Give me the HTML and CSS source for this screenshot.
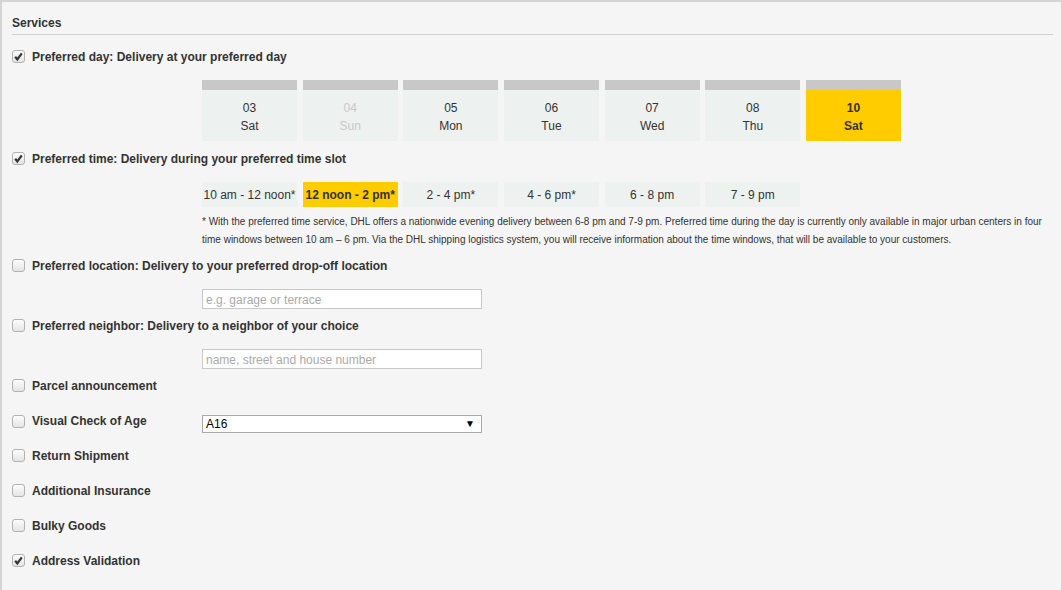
FILE: index.html
```html
<!DOCTYPE html>
<html lang="en">
<head>
<meta charset="utf-8">
<title>Services</title>
<link rel="stylesheet" href="styles.css">
</head>
<body>
<div class="panel">
  <h2 class="title">Services</h2>

  <label class="row r-day">
    <span class="cb checked"><svg viewBox="0 0 13 13" width="13" height="13"><path d="M3.2 6.8 L5.3 9.4 L9.8 3.3" fill="none" stroke="#333" stroke-width="2.2"/></svg></span>
    <span class="lbl">Preferred day: Delivery at your preferred day</span>
  </label>
  <div class="days">
    <div class="day"><div class="bar"></div><div class="body">03<br>Sat</div></div>
    <div class="day off"><div class="bar"></div><div class="body">04<br>Sun</div></div>
    <div class="day"><div class="bar"></div><div class="body">05<br>Mon</div></div>
    <div class="day"><div class="bar"></div><div class="body">06<br>Tue</div></div>
    <div class="day"><div class="bar"></div><div class="body">07<br>Wed</div></div>
    <div class="day"><div class="bar"></div><div class="body">08<br>Thu</div></div>
    <div class="day sel"><div class="bar"></div><div class="body">10<br>Sat</div></div>
  </div>

  <label class="row r-time">
    <span class="cb checked"><svg viewBox="0 0 13 13" width="13" height="13"><path d="M3.2 6.8 L5.3 9.4 L9.8 3.3" fill="none" stroke="#333" stroke-width="2.2"/></svg></span>
    <span class="lbl">Preferred time: Delivery during your preferred time slot</span>
  </label>
  <div class="slots">
    <div class="slot">10 am - 12 noon*</div>
    <div class="slot sel">12 noon - 2 pm*</div>
    <div class="slot">2 - 4 pm*</div>
    <div class="slot">4 - 6 pm*</div>
    <div class="slot">6 - 8 pm</div>
    <div class="slot">7 - 9 pm</div>
  </div>
  <p class="note">* With the preferred time service, DHL offers a nationwide evening delivery between 6-8 pm and 7-9 pm. Preferred time during the day is currently only available in major urban centers in four time windows between 10 am – 6 pm. Via the DHL shipping logistics system, you will receive information about the time windows, that will be available to your customers.</p>

  <label class="row r-loc">
    <span class="cb"></span>
    <span class="lbl">Preferred location: Delivery to your preferred drop-off location</span>
  </label>
  <div class="field"><input class="text" type="text" placeholder="e.g. garage or terrace"></div>

  <label class="row r-nb">
    <span class="cb"></span>
    <span class="lbl">Preferred neighbor: Delivery to a neighbor of your choice</span>
  </label>
  <div class="field"><input class="text" type="text" placeholder="name, street and house number"></div>

  <label class="row r-parcel">
    <span class="cb"></span>
    <span class="lbl">Parcel announcement</span>
  </label>

  <div class="row r-simple r-age">
    <label class="agelabel"><span class="cb"></span><span class="lbl">Visual Check of Age</span></label>
    <span class="selwrap">
      <select class="sel-box"><option>A16</option><option>A18</option></select>
      <span class="arrow">▼</span>
    </span>
  </div>

  <label class="row r-simple">
    <span class="cb"></span>
    <span class="lbl">Return Shipment</span>
  </label>
  <label class="row r-simple">
    <span class="cb"></span>
    <span class="lbl">Additional Insurance</span>
  </label>
  <label class="row r-simple">
    <span class="cb"></span>
    <span class="lbl">Bulky Goods</span>
  </label>
  <label class="row r-simple">
    <span class="cb checked"><svg viewBox="0 0 13 13" width="13" height="13"><path d="M3.2 6.8 L5.3 9.4 L9.8 3.3" fill="none" stroke="#333" stroke-width="2.2"/></svg></span>
    <span class="lbl">Address Validation</span>
  </label>
</div>
</body>
</html>
```
FILE: styles.css
```css
html, body {
  margin: 0;
  padding: 0;
  background: #f5f5f5;
}
body {
  font-family: "Liberation Sans", Arial, sans-serif;
  color: #333;
}
.panel {
  box-sizing: border-box;
  height: 590px;
  border-top: 2px solid #d4d4d4;
  border-left: 2px solid #d4d4d4;
  padding: 0 8px 0 10px;
  background: #f5f5f5;
}
.title {
  margin: 0;
  padding: 13px 0 3px;
  font-size: 12px;
  line-height: 16px;
  font-weight: bold;
  border-bottom: 1px solid #cfcfcf;
}
.row {
  display: flex;
  align-items: center;
  height: 20px;
  cursor: pointer;
}
.agelabel {
  display: flex;
  align-items: center;
  width: 190px;
  height: 20px;
  cursor: pointer;
}
.r-age { align-items: flex-start; }
.cb {
  box-sizing: border-box;
  flex: none;
  width: 13px;
  height: 13px;
  border: 1px solid #b2b2b2;
  border-radius: 3px;
  background: linear-gradient(#fcfcfc, #e4e4e4);
  display: flex;
  align-items: center;
  justify-content: center;
}
.cb svg { display: block; margin: -1px; }
.r-age .cb { margin-top: 3px; }
.lbl {
  margin-left: 7px;
  padding-top: 2px;
  font-size: 12px;
  font-weight: bold;
  color: #333;
  white-space: nowrap;
}
.r-age .lbl { align-self: flex-start; line-height: 20px; padding-top: 1px; }
.r-day { margin-top: 11px; }
.r-time { margin-top: 7px; }
.r-loc { margin-top: 6px; }
.r-nb { margin-top: 6px; }
.r-parcel { margin-top: 6px; }
.r-simple { margin-top: 15px; }

.days, .slots {
  display: grid;
  grid-template-columns: repeat(7, 95px);
  column-gap: 5.67px;
  margin-left: 190px;
}
.days { margin-top: 14px; }
.day .bar {
  height: 10px;
  background: #c8c8c8;
}
.day .body {
  background: #edf2f0;
  height: 51px;
  box-sizing: border-box;
  padding-top: 9px;
  text-align: center;
  font-size: 12px;
  line-height: 18px;
  color: #333;
}
.day.off .body { color: #c8c8c8; }
.day.sel .body {
  background: #ffcc00;
  font-weight: bold;
}
.slots { margin-top: 14px; }
.slot {
  box-sizing: border-box;
  height: 25px;
  padding-top: 1px;
  line-height: 25px;
  background: #edf2f0;
  text-align: center;
  font-size: 12px;
  color: #333;
  white-space: nowrap;
  overflow: hidden;
}
.slot.sel {
  background: #ffcc00;
  font-weight: bold;
}
.note {
  margin: 6px 0 0 190px;
  font-size: 10px;
  line-height: 18px;
  color: #333;
}
.field {
  margin: 14px 0 0 190px;
  height: 20px;
}
.text {
  box-sizing: border-box;
  display: block;
  width: 280px;
  height: 20px;
  margin: 0;
  padding: 1px 3px 0;
  border: 1px solid #c8c8c8;
  background: #fff;
  font-family: "Liberation Sans", Arial, sans-serif;
  font-size: 12px;
  color: #333;
  outline: none;
}
.text::placeholder { color: #aaa; }
.selwrap {
  position: relative;
  display: block;
  margin-top: 5px;
  width: 280px;
  height: 18px;
}
.sel-box {
  -webkit-appearance: none;
  appearance: none;
  box-sizing: border-box;
  display: block;
  width: 280px;
  height: 18px;
  margin: 0;
  padding: 0 0 0 3px;
  border: 1px solid #a9a9a9;
  border-radius: 0;
  background: #fff;
  font-family: "Liberation Sans", Arial, sans-serif;
  font-size: 12px;
  color: #000;
  outline: none;
}
.arrow {
  position: absolute;
  right: 7px;
  top: 0;
  line-height: 18px;
  font-size: 10px;
  color: #000;
  pointer-events: none;
}
```
